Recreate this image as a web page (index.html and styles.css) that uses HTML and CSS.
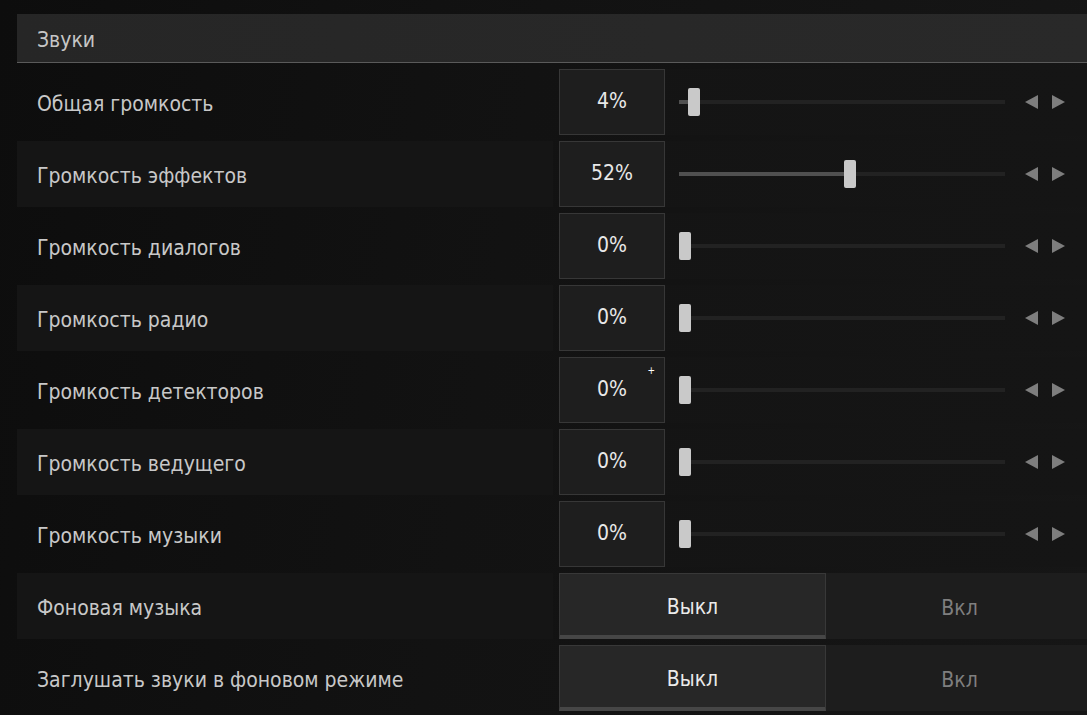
FILE: index.html
```html
<!DOCTYPE html>
<html lang="ru">
<head>
<meta charset="utf-8">
<title>Звуки</title>
<link rel="stylesheet" href="styles.css">
</head>
<body>
<div class="panel">
  <div class="header">Звуки</div>

  <div class="row">
    <div class="label">Общая громкость</div>
    <div class="control">
      <div class="value">4%</div>
      <div class="slider"><div class="track" style="--p:0.04"><div class="fill"></div><div class="thumb"></div></div></div>
      <div class="arrows"><span class="arrow left"></span><span class="arrow right"></span></div>
    </div>
  </div>

  <div class="row alt">
    <div class="label">Громкость эффектов</div>
    <div class="control">
      <div class="value">52%</div>
      <div class="slider"><div class="track" style="--p:0.52"><div class="fill"></div><div class="thumb"></div></div></div>
      <div class="arrows"><span class="arrow left"></span><span class="arrow right"></span></div>
    </div>
  </div>

  <div class="row">
    <div class="label">Громкость диалогов</div>
    <div class="control">
      <div class="value">0%</div>
      <div class="slider"><div class="track" style="--p:0"><div class="fill"></div><div class="thumb"></div></div></div>
      <div class="arrows"><span class="arrow left"></span><span class="arrow right"></span></div>
    </div>
  </div>

  <div class="row alt">
    <div class="label">Громкость радио</div>
    <div class="control">
      <div class="value">0%</div>
      <div class="slider"><div class="track" style="--p:0"><div class="fill"></div><div class="thumb"></div></div></div>
      <div class="arrows"><span class="arrow left"></span><span class="arrow right"></span></div>
    </div>
  </div>

  <div class="row">
    <div class="label">Громкость детекторов</div>
    <div class="control">
      <div class="value">0%<span class="cursor">+</span></div>
      <div class="slider"><div class="track" style="--p:0"><div class="fill"></div><div class="thumb"></div></div></div>
      <div class="arrows"><span class="arrow left"></span><span class="arrow right"></span></div>
    </div>
  </div>

  <div class="row alt">
    <div class="label">Громкость ведущего</div>
    <div class="control">
      <div class="value">0%</div>
      <div class="slider"><div class="track" style="--p:0"><div class="fill"></div><div class="thumb"></div></div></div>
      <div class="arrows"><span class="arrow left"></span><span class="arrow right"></span></div>
    </div>
  </div>

  <div class="row">
    <div class="label">Громкость музыки</div>
    <div class="control">
      <div class="value">0%</div>
      <div class="slider"><div class="track" style="--p:0"><div class="fill"></div><div class="thumb"></div></div></div>
      <div class="arrows"><span class="arrow left"></span><span class="arrow right"></span></div>
    </div>
  </div>

  <div class="row alt">
    <div class="label">Фоновая музыка</div>
    <div class="control toggle">
      <div class="opt active">Выкл</div>
      <div class="opt">Вкл</div>
    </div>
  </div>

  <div class="row">
    <div class="label">Заглушать звуки в фоновом режиме</div>
    <div class="control toggle">
      <div class="opt active">Выкл</div>
      <div class="opt">Вкл</div>
    </div>
  </div>
</div>
</body>
</html>
```

FILE: styles.css
```css
html, body {
  margin: 0;
  padding: 0;
  height: 100%;
  overflow: hidden;
}

body {
  background: linear-gradient(100deg, #0d0d0d 0%, #121212 45%, #161616 100%);
  font-family: "DejaVu Sans Condensed", "DejaVu Sans", sans-serif;
  font-stretch: condensed;
  font-size: 21px;
  color: #c8c8c8;
}

.panel {
  margin-left: 17px;
  padding-top: 14px;
  width: 1076px;
}

.header {
  box-sizing: border-box;
  height: 49px;
  border-bottom: 1px solid #5a5a5a;
  background: linear-gradient(90deg, #262626 0%, #282828 60%, #292929 100%);
  display: flex;
  align-items: center;
  padding-left: 20px;
  padding-top: 3px;
  color: #c6c6c6;
}

.row {
  margin-top: 6px;
  height: 66px;
  display: grid;
  grid-template-columns: 536px 534px;
  column-gap: 6px;
}

.label {
  display: flex;
  align-items: center;
  padding-left: 20px;
  padding-top: 3px;
  color: #c8c8c8;
}

.row.alt .label {
  background: #151515;
}

.control {
  display: flex;
  align-items: center;
  background: linear-gradient(90deg, #141414 0%, #151515 100%);
}

.value {
  position: relative;
  box-sizing: border-box;
  width: 106px;
  height: 66px;
  border: 1px solid #373737;
  background: #1e1e1e;
  color: #e8e8e8;
  display: flex;
  align-items: center;
  justify-content: center;
  padding-bottom: 2px;
  flex: none;
}

.cursor {
  position: absolute;
  right: 9px;
  top: 8px;
  font-family: "DejaVu Sans", sans-serif;
  font-size: 10px;
  line-height: 10px;
  color: #ffffff;
}

.slider {
  margin-left: 14px;
  width: 326px;
  height: 28px;
  display: flex;
  align-items: center;
  flex: none;
}

.track {
  position: relative;
  width: 100%;
  height: 4px;
  background: #222222;
}

.fill {
  height: 100%;
  width: max(0px, calc(var(--p) * 325px + 4px));
  background: #505050;
}

.thumb {
  position: absolute;
  top: -12px;
  left: max(0px, calc(var(--p) * 325px - 4px));
  width: 12px;
  height: 28px;
  border-radius: 2px;
  background: #c9c9c9;
}

.arrows {
  margin-left: 20px;
  display: flex;
  align-items: center;
  gap: 14px;
  flex: none;
}

.arrow {
  width: 0;
  height: 0;
  border-top: 7px solid transparent;
  border-bottom: 7px solid transparent;
}

.arrow.left {
  border-right: 13px solid #7e7e7e;
}

.arrow.right {
  border-left: 13px solid #7e7e7e;
}

.toggle {
  background: #1d1d1d;
}

.opt {
  box-sizing: border-box;
  width: 267px;
  height: 66px;
  display: flex;
  align-items: center;
  justify-content: center;
  padding-top: 3px;
  color: #7f7f7f;
  flex: none;
}

.opt.active {
  background: #272727;
  border: 1px solid #383838;
  border-bottom: 4px solid #464646;
  color: #ebebeb;
  padding-top: 4px;
}
```
